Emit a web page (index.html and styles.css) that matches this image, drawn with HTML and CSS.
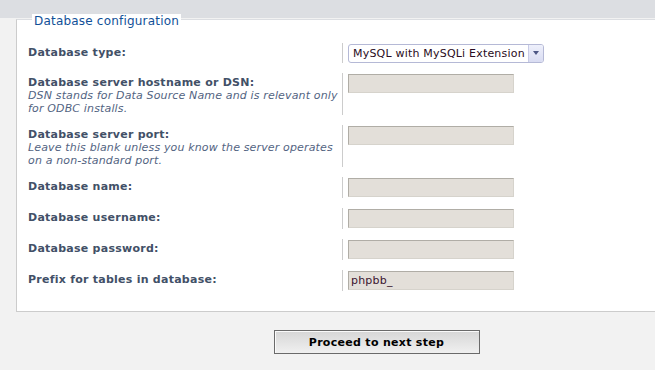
FILE: index.html
```html
<!DOCTYPE html>
<html>
<head>
<meta charset="utf-8">
<link rel="stylesheet" href="styles.css">
</head>
<body>
<div class="wrap">
  <fieldset class="panel">
    <legend class="legend"><span class="legend-text">Database configuration</span></legend>
    <div class="rows">
      <div class="row row-select">
        <div class="label"><span class="name">Database type:</span></div>
        <div class="field">
          <span class="select-wrap">
            <select class="select"><option>MySQL with MySQLi Extension</option></select>
          </span>
        </div>
      </div>
      <div class="row">
        <div class="label"><span class="name">Database server hostname or DSN:</span><span class="explain">DSN stands for Data Source Name and is relevant only for ODBC installs.</span></div>
        <div class="field"><input class="input" type="text" value=""></div>
      </div>
      <div class="row">
        <div class="label"><span class="name">Database server port:</span><span class="explain">Leave this blank unless you know the server operates on a non-standard port.</span></div>
        <div class="field"><input class="input" type="text" value=""></div>
      </div>
      <div class="row">
        <div class="label"><span class="name">Database name:</span></div>
        <div class="field"><input class="input" type="text" value=""></div>
      </div>
      <div class="row">
        <div class="label"><span class="name">Database username:</span></div>
        <div class="field"><input class="input" type="text" value=""></div>
      </div>
      <div class="row">
        <div class="label"><span class="name">Database password:</span></div>
        <div class="field"><input class="input" type="password" value=""></div>
      </div>
      <div class="row">
        <div class="label"><span class="name">Prefix for tables in database:</span></div>
        <div class="field"><input class="input" type="text" value="phpbb_"></div>
      </div>
    </div>
  </fieldset>
  <div class="actions">
    <button class="button" type="button">Proceed to next step</button>
  </div>
</div>
</body>
</html>
```

FILE: styles.css
```css
html, body {
  margin: 0;
  padding: 0;
}
body {
  background: linear-gradient(#dcdee2 0, #dcdee2 18px, #f2f2f2 18px);
  font-family: "DejaVu Sans", Verdana, sans-serif;
  overflow: hidden;
  height: 370px;
}
.wrap {
  width: 721px;
  margin-left: 16px;
  padding-top: 10px;
}
.panel {
  margin: 0;
  padding: 0 11px 20px 11px;
  background: #fff;
  border: 1px solid #cccccc;
  border-top-color: #dcdee2;
  min-width: 0;
}
.legend {
  margin-left: 4px;
  padding: 4px 0 0 0;
  color: #115098;
  font-size: 12px;
  line-height: 14px;
}
.legend-text {
  display: block;
  padding: 0 2px;
  background: #fff;
  letter-spacing: 0.2px;
}
.rows {
  margin-top: 15px;
  display: flex;
  flex-direction: column;
  gap: 10px;
}
.row {
  display: flex;
  min-height: 21px;
}
.row-select {
  min-height: 20px;
}
.label {
  width: 314px;
  flex: none;
  padding-top: 4px;
  display: flex;
  flex-direction: column;
}
.name {
  color: #425067;
  font-weight: bold;
  font-size: 11px;
  line-height: 12px;
  letter-spacing: 0.25px;
}
.explain {
  color: #536482;
  font-style: italic;
  font-size: 11px;
  line-height: 13px;
  letter-spacing: 0.15px;
}
.field {
  flex: 1;
  display: flex;
  align-items: flex-start;
  border-left: 1px solid #cccccc;
  padding: 1px 0 0 5px;
}
.input {
  box-sizing: border-box;
  width: 166px;
  height: 19px;
  margin: 0;
  padding: 0 2px;
  background: #e3dfd9;
  border: 1px solid;
  border-color: #b0ada6 #d6d3cc #d6d3cc #b0ada6;
  font-family: "DejaVu Sans", Verdana, sans-serif;
  font-size: 11px;
  letter-spacing: 0.2px;
  color: #3a1530;
  outline: none;
}
.select-wrap {
  position: relative;
  display: block;
}
.select {
  appearance: none;
  -webkit-appearance: none;
  box-sizing: border-box;
  display: block;
  width: 196px;
  height: 19px;
  margin: 0;
  padding: 0 18px 0 4px;
  background: #fff;
  border: 1px solid #b5b9d6;
  border-radius: 3px;
  font-family: "DejaVu Sans", Verdana, sans-serif;
  font-size: 11px;
  letter-spacing: 0.2px;
  color: #2a0c22;
}
.select-wrap::after {
  content: "";
  position: absolute;
  right: 1px;
  top: 1px;
  bottom: 1px;
  width: 14px;
  border-left: 1px solid #c8cbe6;
  border-radius: 0 2px 2px 0;
  background: linear-gradient(#eef0fb, #d9dcf2);
}
.select-wrap::before {
  content: "";
  position: absolute;
  right: 5px;
  top: 7px;
  border-left: 3.5px solid transparent;
  border-right: 3.5px solid transparent;
  border-top: 4px solid #4d5785;
  z-index: 1;
}
.actions {
  display: flex;
  justify-content: center;
  padding-top: 18px;
}
.button {
  box-sizing: border-box;
  width: 206px;
  height: 24px;
  margin: 0;
  border: 1px solid #6a6a6a;
  background: linear-gradient(#d6d6d6, #f0f0f0);
  box-shadow: inset 1px 1px 0 #fafafa;
  font-family: "DejaVu Sans", Verdana, sans-serif;
  font-weight: bold;
  font-size: 11px;
  letter-spacing: 0.3px;
  color: #000;
  padding: 0;
}
```
